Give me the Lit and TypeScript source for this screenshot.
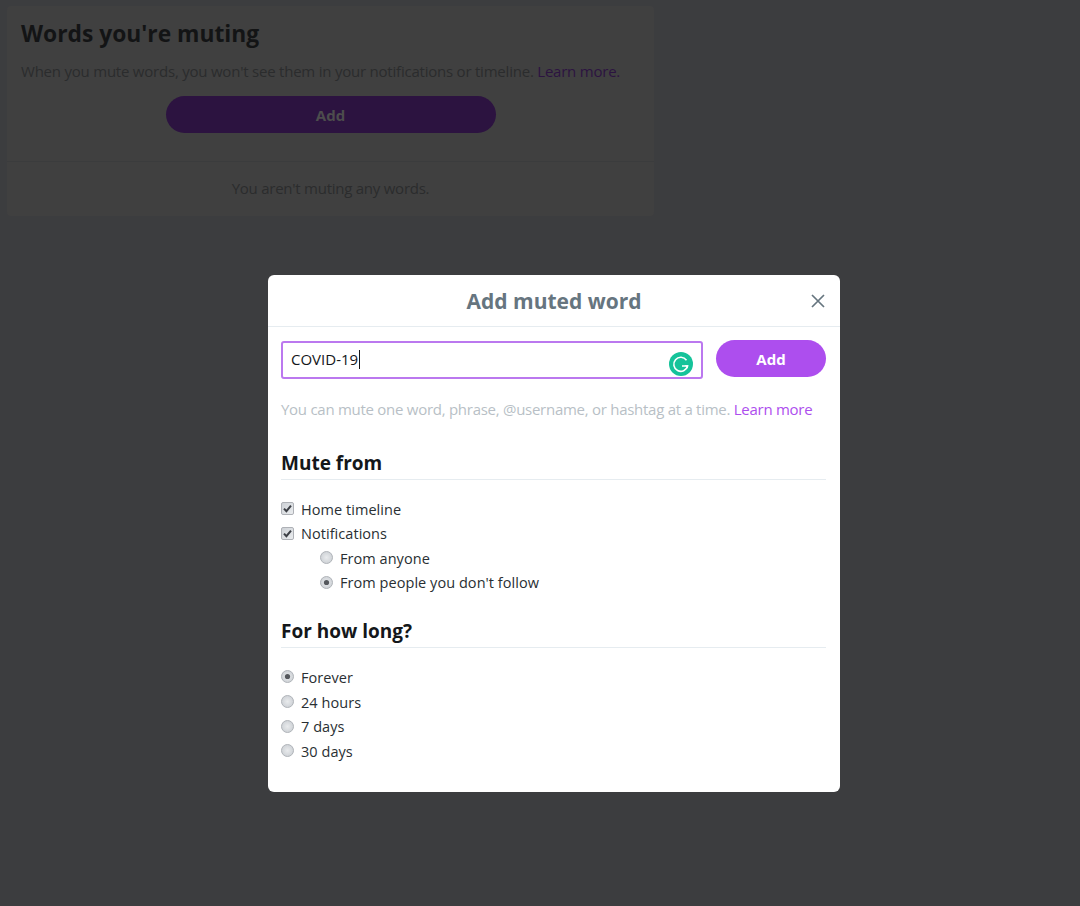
import { LitElement, html, css, svg } from "lit";
import { customElement } from "lit/decorators.js";

const check = html`<svg class="ctl" viewBox="0 0 13 13" width="13" height="13">
  <defs><linearGradient id="cb" x1="0" y1="0" x2="1" y2="1"><stop offset="0" stop-color="#ccd0d5"/><stop offset="1" stop-color="#eceef0"/></linearGradient></defs>
  <rect x=".5" y=".5" width="12" height="12" rx="1.5" fill="url(#cb)" stroke="#aeb1b6"/>
  <path d="M3 6.6 5.4 9.2 10 3.6" fill="none" stroke="#3c3f45" stroke-width="2"/>
</svg>`;

const radio = (on: boolean) => html`<svg class="ctl" viewBox="0 0 13 13" width="13" height="13">
  <defs><radialGradient id="rb" cx=".5" cy=".5" r=".6"><stop offset="0" stop-color="#e9ebed"/><stop offset="1" stop-color="#c9cdd2"/></radialGradient></defs>
  <circle cx="6.5" cy="6.5" r="6" fill="url(#rb)" stroke="#b0b4b9"/>
  ${on ? svg`<circle cx="6.5" cy="6.5" r="2.6" fill="#55585d"/>` : ""}
</svg>`;

@customElement("app-root")
export class AppRoot extends LitElement {
  static styles = css`
    :host {
      display: block;
      position: relative;
      width: 1080px;
      height: 906px;
      overflow: hidden;
      background: #3c3d3f;
      font-family: "Open Sans", "Noto Sans", sans-serif;
      color: #14171a;
      box-sizing: border-box;
      padding: 6px 426px 0 7px;
    }
    * { box-sizing: border-box; }
    .card {
      height: 210px;
      background: #404040;
      border-radius: 4px;
      display: flex;
      flex-direction: column;
    }
    .card-top {
      height: 156px;
      padding: 13px 14px 0;
      border-bottom: 1px solid #3b3c3d;
      display: flex;
      flex-direction: column;
    }
    .card-title {
      margin: 0;
      font-size: 22.8px;
      line-height: 30px;
      font-weight: 700;
      color: #131415;
    }
    .card-text {
      margin: 12px 0 0;
      font-size: 15px;
      line-height: 20px;
      letter-spacing: -0.22px;
      color: #2b2c2d;
      white-space: nowrap;
    }
    .card-text a { color: #2c1340; }
    .card-btn {
      align-self: center;
      margin-top: 15px;
      width: 330px;
      height: 37px;
      border-radius: 19px;
      background: #2c1340;
      color: #4d4d4d;
      font-size: 15px;
      font-weight: 700;
      display: flex;
      align-items: center;
      justify-content: center;
    }
    .card-empty {
      flex: 1;
      display: flex;
      align-items: center;
      justify-content: center;
      padding-bottom: 2px;
      font-size: 15px;
      letter-spacing: -0.25px;
      color: #2b2c2d;
    }
    .modal {
      position: absolute;
      left: 268px;
      top: 275px;
      width: 572px;
      height: 517px;
      background: #fff;
      border-radius: 6px;
      overflow: hidden;
    }
    .head {
      height: 52px;
      border-bottom: 1px solid #e6ecf0;
      display: flex;
      align-items: center;
      justify-content: center;
      position: relative;
    }
    .head h2 {
      margin: 0;
      font-size: 21px;
      font-weight: 700;
      color: #66757f;
    }
    .close {
      position: absolute;
      right: 14px;
      top: 18px;
      width: 16px;
      height: 16px;
    }
    .body { padding: 13px 14px 0 13px; }
    .input-row {
      display: flex;
      gap: 13px;
      align-items: flex-start;
    }
    .input {
      position: relative;
      flex: 1;
      margin-top: 1px;
      height: 38px;
      border: 2px solid #bb78ef;
      border-radius: 3px;
      padding: 0 0 2px 8px;
      display: flex;
      align-items: center;
      font-size: 15px;
      color: #14171a;
    }
    .caret {
      display: inline-block;
      width: 1px;
      height: 19px;
      background: #14171a;
      margin-left: 1px;
    }
    .grammarly {
      position: absolute;
      right: 8px;
      top: 9px;
      width: 24px;
      height: 24px;
    }
    .add {
      width: 110px;
      height: 37px;
      border-radius: 19px;
      background: #ad4eee;
      color: #fff;
      font-size: 15px;
      font-weight: 700;
      display: flex;
      align-items: center;
      justify-content: center;
    }
    .hint {
      margin: 20px 0 0;
      font-size: 15px;
      line-height: 20px;
      letter-spacing: -0.27px;
      color: #b8bfc6;
      white-space: nowrap;
    }
    .hint a { color: #ad4eee; }
    .section {
      margin: 0;
      padding-bottom: 4px;
      border-bottom: 1px solid #e6ecf0;
      font-size: 19px;
      line-height: 24px;
      font-weight: 700;
      color: #14171a;
    }
    .mute { margin-top: 32px; }
    .long { margin-top: 23.3px; }
    .opts {
      margin-top: 17.7px;
      display: flex;
      flex-direction: column;
      font-size: 14.5px;
      line-height: 24.6px;
      letter-spacing: 0.05px;
      color: #292f33;
    }
    .opt {
      display: flex;
      align-items: center;
      gap: 7px;
      height: 24.6px;
      white-space: nowrap;
    }
    .ctl { flex: none; margin-top: -3px; }
    .sub { padding-left: 39px; }
  `;

  render() {
    return html`
      <section class="card">
        <div class="card-top">
          <h1 class="card-title">Words you're muting</h1>
          <p class="card-text">When you mute words, you won't see them in your notifications or timeline. <a>Learn more.</a></p>
          <div class="card-btn">Add</div>
        </div>
        <div class="card-empty">You aren't muting any words.</div>
      </section>
      <div class="modal">
        <div class="head">
          <h2>Add muted word</h2>
          <svg class="close" viewBox="0 0 16 16"><path d="M2 2 14 14M14 2 2 14" stroke="#66757f" stroke-width="1.7" fill="none"/></svg>
        </div>
        <div class="body">
          <div class="input-row">
            <div class="input">
              <span>COVID-19</span><span class="caret"></span>
              <svg class="grammarly" viewBox="0 0 24 24">
                <circle cx="12" cy="12" r="12" fill="#15c39a"/>
                <path d="M17.5 8.2A7 7 0 1 0 18.6 14H13" fill="none" stroke="#fff" stroke-width="1.6"/>
                <path d="M15.6 13.2 19 13.2 19 16.6Z" fill="#fff"/>
              </svg>
            </div>
            <div class="add">Add</div>
          </div>
          <p class="hint">You can mute one word, phrase, @username, or hashtag at a time. <a>Learn more</a></p>
          <div class="mute">
            <h3 class="section">Mute from</h3>
            <div class="opts">
              <div class="opt">${check}Home timeline</div>
              <div class="opt">${check}Notifications</div>
              <div class="opt sub">${radio(false)}From anyone</div>
              <div class="opt sub">${radio(true)}From people you don't follow</div>
            </div>
          </div>
          <div class="long">
            <h3 class="section">For how long?</h3>
            <div class="opts">
              <div class="opt">${radio(true)}Forever</div>
              <div class="opt">${radio(false)}24 hours</div>
              <div class="opt">${radio(false)}7 days</div>
              <div class="opt">${radio(false)}30 days</div>
            </div>
          </div>
        </div>
      </div>
    `;
  }
}
